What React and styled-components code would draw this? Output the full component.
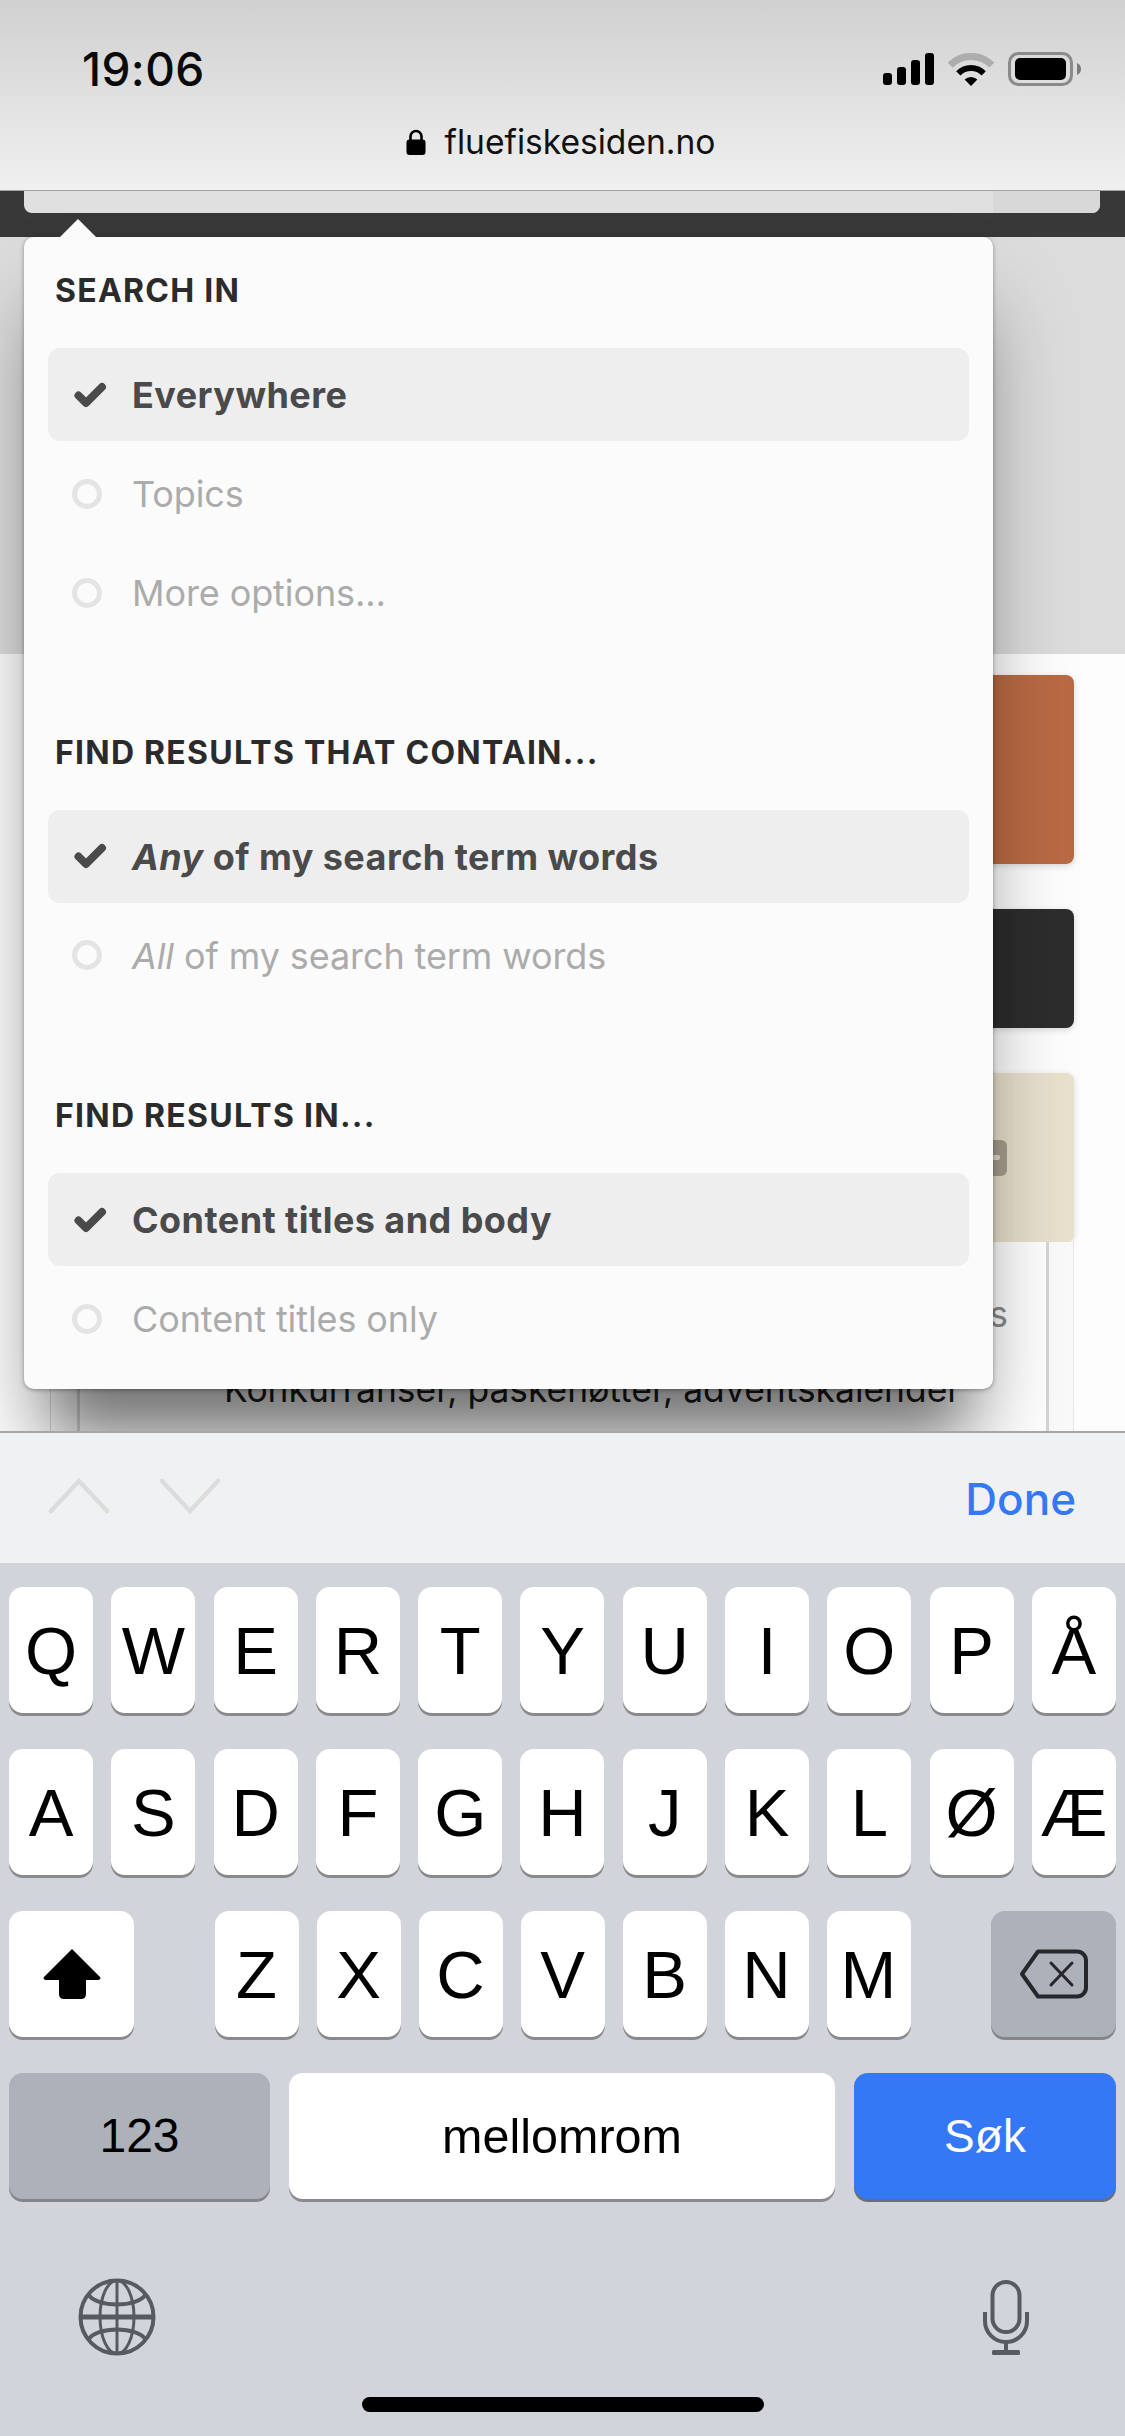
import React from 'react';
import styled, { createGlobalStyle } from 'styled-components';

const GlobalStyle = createGlobalStyle`
  html, body {
    margin: 0;
    padding: 0;
    background: #d1d4da;
  }
  * {
    box-sizing: border-box;
  }
`;

const Screen = styled.div`
  width: 1125px;
  height: 2436px;
  display: flex;
  flex-direction: column;
  overflow: hidden;
  font-family: Inter, 'Liberation Sans', sans-serif;
`;

/* browser chrome */
const TopBar = styled.header`
  height: 191px;
  flex: none;
  padding: 52px 44px 0 82px;
  background: linear-gradient(#d0d0d0, #f0f0f0);
  border-bottom: 1px solid #a3a3a3;
  position: relative;
  z-index: 3;
`;

const StatusRow = styled.div`
  height: 34px;
  display: flex;
  align-items: center;
  justify-content: space-between;
`;

const Time = styled.span`
  font-size: 46px;
  font-weight: 500;
  letter-spacing: 0.4px;
  line-height: 34px;
  color: #0a0a0a;
`;

const StatusIcons = styled.div`
  display: flex;
  align-items: center;
  gap: 14px;
`;

const AddressRow = styled.div`
  margin: 38px 0 0 -82px;
  width: 1125px;
  display: flex;
  align-items: center;
  justify-content: center;
  gap: 18px;
  padding-right: 3px;
`;

const Address = styled.span`
  font-size: 33.6px;
  line-height: 36px;
  color: #111;
`;

/* page behind the popup */
const Content = styled.main`
  height: 1240px;
  flex: none;
  position: relative;
  overflow: hidden;
  background: #fdfdfd;
`;

const Band = styled.div`
  height: 46px;
  padding: 0 25px 0 24px;
  background: #383838;
`;

const SearchBox = styled.div`
  height: 22px;
  display: flex;
  justify-content: flex-end;
  border-radius: 0 0 8px 8px;
  overflow: hidden;
  background: #e0e0e0;
`;

const SearchButton = styled.div`
  width: 107px;
  background: #d8d8d8;
`;

const Hero = styled.div`
  height: 417px;
  background: #dcdcdc;
`;

const Column = styled.div`
  padding: 21px 51px 0 50px;
  display: flex;
  flex-direction: column;
`;

const Banner = styled.div`
  height: ${(p) => p.$height}px;
  margin-bottom: ${(p) => p.$gap}px;
  border-radius: 8px;
  background: ${(p) => p.$color};
  box-shadow: 0 2px 6px rgba(0, 0, 0, 0.15);
  display: flex;
  align-items: center;
  justify-content: flex-end;
`;

const BannerBadge = styled.span`
  width: 62px;
  height: 36px;
  margin-right: 67px;
  padding-right: 7px;
  border-radius: 6px;
  background: rgba(90, 80, 70, 0.45);
  display: flex;
  align-items: center;
  justify-content: flex-end;

  &::after {
    content: '';
    width: 8px;
    height: 5px;
    border-radius: 2px;
    background: #e6dfcf;
  }
`;

const Outer = styled.div`
  height: 200px;
  padding: 0 24px 0 26px;
  background: #fafafa;
  border-left: 1px solid #d8d8d8;
  border-right: 1px solid #e6e6e6;
`;

const Inner = styled.div`
  height: 100%;
  padding: 49px 38px 0 144px;
  background: #fff;
  border: 2px solid #d6d6d6;
  border-width: 0 3px;
  font-size: 35.4px;
  line-height: 48px;
  color: #3a3a3a;
  text-align: right;
`;

const FadedLine = styled.div`
  height: 75px;
  color: #8a8a8a;
`;

const DimLine = styled.div`
  margin-right: 48px;
  white-space: nowrap;
  text-align: left;
  color: #1c1c1c;
`;

/* search options popup */
const Popup = styled.section`
  position: absolute;
  left: 24px;
  top: 46px;
  width: 969px;
  padding: 0 24px 24px;
  border-radius: 10px;
  background: #fbfbfb;
  box-shadow: 0 1px 4px rgba(0, 0, 0, 0.35), 0 60px 80px -10px rgba(0, 0, 0, 0.36),
    0 76px 50px -36px rgba(0, 0, 0, 0.3);

  &::before {
    content: '';
    position: absolute;
    left: 36px;
    top: -18px;
    border-left: 18px solid transparent;
    border-right: 18px solid transparent;
    border-bottom: 18px solid #fbfbfb;
  }
`;

const Heading = styled.h3`
  margin: ${(p) => p.$top}px 0 39px;
  padding-left: 7px;
  font-size: 32px;
  line-height: 36px;
  font-weight: 700;
  letter-spacing: 1.25px;
  color: #2b2b2b;
`;

const Options = styled.div`
  display: flex;
  flex-direction: column;
  gap: 6px;
`;

const Option = styled.div`
  height: 93px;
  display: flex;
  align-items: center;
  padding-left: 24px;
  border-radius: 12px;
  font-size: 36px;
  letter-spacing: ${(p) => (p.$active ? 0.45 : -0.1)}px;
  font-weight: ${(p) => (p.$active ? 700 : 400)};
  color: ${(p) => (p.$active ? '#4a4a4a' : '#ababab')};
  background: ${(p) => (p.$active ? '#eeeeee' : 'transparent')};
`;

const OptionMark = styled.span`
  width: 60px;
  flex: none;
  display: flex;
  align-items: center;
`;

const OptionLabel = styled.span`
  padding-top: 1px;
`;

const Radio = styled.span`
  width: 30px;
  height: 30px;
  border-radius: 50%;
  border: 5px solid #e4e4e4;
`;

/* toolbar above the keyboard */
const Accessory = styled.div`
  height: 132px;
  flex: none;
  padding: 0 49px 0 48px;
  display: flex;
  align-items: center;
  justify-content: space-between;
  background: #f0f1f2;
  border-top: 2px solid #a6a6a6;
  position: relative;
  z-index: 3;
`;

const Chevrons = styled.div`
  display: flex;
  gap: 49px;
  margin-top: -4px;
`;

const Done = styled.span`
  font-size: 44px;
  font-weight: 500;
  color: #3478f6;
  margin-top: 2px;
`;

/* keyboard */
const Keyboard = styled.div`
  height: 873px;
  flex: none;
  padding: 24px 9px 0;
  display: flex;
  flex-direction: column;
  background: #d1d4da;
  position: relative;
  z-index: 3;
`;

const KeyRows = styled.div`
  display: flex;
  flex-direction: column;
  gap: 36px;
`;

const KeyRow = styled.div`
  display: flex;
  justify-content: space-between;
`;

const KeyGroup = styled.div`
  display: flex;
  gap: 18px;
`;

const tones = {
  light: { bg: '#ffffff', fg: '#000000', edge: '#898a8d' },
  dark: { bg: '#acb1ba', fg: '#000000', edge: '#858689' },
  blue: { bg: '#3478f6', fg: '#ffffff', edge: '#6b6e75' }
};

const Key = styled.div`
  width: ${(p) => p.$width || 84}px;
  height: 126px;
  display: flex;
  align-items: center;
  justify-content: center;
  border-radius: 14px;
  font-family: 'Liberation Sans', Arial, sans-serif;
  font-size: ${(p) => p.$size || 67}px;
  line-height: 1;
  background: ${(p) => tones[p.$tone || 'light'].bg};
  color: ${(p) => tones[p.$tone || 'light'].fg};
  box-shadow: 0 3px 0 ${(p) => tones[p.$tone || 'light'].edge};
`;

const SystemRow = styled.div`
  margin-top: 79px;
  padding: 0 87px 0 69px;
  height: 78px;
  display: flex;
  justify-content: space-between;
  align-items: center;
`;

const HomeBar = styled.div`
  width: 402px;
  height: 15px;
  margin: 41px auto 0;
  border-radius: 8px;
  background: #000;
`;

const SignalIcon = () => (
  <svg width="51" height="32" viewBox="0 0 51 32" fill="#000">
    <rect x="0" y="20" width="9" height="12" rx="3" />
    <rect x="14" y="14" width="9" height="18" rx="3" />
    <rect x="28" y="7" width="9" height="25" rx="3" />
    <rect x="42" y="0" width="9" height="32" rx="3" />
  </svg>
);

const WifiIcon = () => (
  <svg width="46" height="33" viewBox="0 0 46 33" fill="none">
    <path d="M2.1 12.1A29.5 29.5 0 0 1 43.9 12.1" stroke="#adadad" strokeWidth="7" />
    <path d="M10.3 20.3A18 18 0 0 1 35.7 20.3" stroke="#000" strokeWidth="6" />
    <path d="M23 33L16.6 26.6A9 9 0 0 1 29.4 26.6Z" fill="#000" />
  </svg>
);

const BatteryIcon = () => (
  <svg width="73" height="34" viewBox="0 0 73 34">
    <rect x="1.5" y="1.5" width="62" height="31" rx="9" fill="none" stroke="#8a8a8a" strokeWidth="3" />
    <rect x="7" y="6" width="51" height="22" rx="5" fill="#000" />
    <path d="M69 11c2.5 1 4 3 4 6s-1.500 5-4 6z" fill="#7a7a7a" />
  </svg>
);

const LockIcon = () => (
  <svg width="20" height="26" viewBox="0 0 20 26">
    <path d="M4.500 12V7.500a5.500 5.500 0 0 1 11 0V12" fill="none" stroke="#000" strokeWidth="2.600" />
    <rect x="0.500" y="10.500" width="19" height="15.500" rx="3" fill="#000" />
  </svg>
);

const CheckIcon = () => (
  <svg width="36" height="28" viewBox="0 0 36 28" fill="none">
    <path
      d="M6.500 14.500L14 22L30 6"
      stroke="#4a4a4a"
      strokeWidth="8"
      strokeLinecap="round"
      strokeLinejoin="round"
    />
  </svg>
);

const ChevronIcon = ({ down }) => (
  <svg width="62" height="36" viewBox="0 0 62 36" fill="none">
    <path
      d={down ? 'M3 3L31 33L59 3' : 'M3 33L31 3L59 33'}
      stroke="#dcdcdc"
      strokeWidth="4.500"
      strokeLinecap="round"
    />
  </svg>
);

const ShiftIcon = () => (
  <svg width="58" height="50" viewBox="0 0 58 50" fill="#000">
    <path d="M29 0L57 28Q58.500 31 55 31H43V45Q43 50 38 50H21Q16 50 16 45V31H3Q-0.500 31 1 28Z" />
  </svg>
);

const DeleteIcon = () => (
  <svg width="70" height="50" viewBox="0 0 70 50" fill="none" stroke="#25272b">
    <path
      d="M19 2.500H58a9 9 0 0 1 9 9v27a9 9 0 0 1-9 9H19L3 25Z"
      strokeWidth="4"
      strokeLinejoin="round"
    />
    <path d="M32 14L53 36M53 14L32 36" strokeWidth="3" strokeLinecap="round" />
  </svg>
);

const GlobeIcon = () => (
  <svg width="78" height="78" viewBox="0 0 78 78" fill="none" stroke="#575a60" strokeWidth="3">
    <circle cx="39" cy="39" r="36.500" strokeWidth="4" />
    <ellipse cx="39" cy="39" rx="17" ry="36.500" />
    <path d="M39 2V76" />
    <path d="M2 39H76" strokeWidth="5" />
    <path d="M10 16C18 30 60 30 68 16" strokeWidth="4" />
    <path d="M10 62C18 48 60 48 68 62" strokeWidth="4" />
  </svg>
);

const MicIcon = () => (
  <svg width="46" height="75" viewBox="0 0 46 75" fill="none" stroke="#575a60" strokeWidth="4">
    <rect x="9.500" y="2" width="27" height="50" rx="13.500" />
    <path d="M2 32V41a21 21 0 0 0 42 0V32" />
    <path d="M23 62V70" />
    <rect x="9" y="70" width="28" height="5" rx="1.500" fill="#575a60" stroke="none" />
  </svg>
);

const optionGroups = [
  {
    title: 'SEARCH IN',
    top: 36,
    options: [
      { label: 'Everywhere', active: true },
      { label: 'Topics' },
      { label: 'More options...' }
    ]
  },
  {
    title: 'FIND RESULTS THAT CONTAIN...',
    top: 95.5,
    options: [
      { em: 'Any', label: ' of my search term words', active: true },
      { em: 'All', label: ' of my search term words' }
    ]
  },
  {
    title: 'FIND RESULTS IN...',
    top: 96.5,
    options: [
      { label: 'Content titles and body', active: true },
      { label: 'Content titles only' }
    ]
  }
];

const topRow = ['Q', 'W', 'E', 'R', 'T', 'Y', 'U', 'I', 'O', 'P', 'Å'];
const midRow = ['A', 'S', 'D', 'F', 'G', 'H', 'J', 'K', 'L', 'Ø', 'Æ'];
const lowRow = ['Z', 'X', 'C', 'V', 'B', 'N', 'M'];

function App() {
  return (
    <Screen>
      <GlobalStyle />
      <TopBar>
        <StatusRow>
          <Time>19:06</Time>
          <StatusIcons>
            <SignalIcon />
            <WifiIcon />
            <BatteryIcon />
          </StatusIcons>
        </StatusRow>
        <AddressRow>
          <LockIcon />
          <Address>fluefiskesiden.no</Address>
        </AddressRow>
      </TopBar>

      <Content>
        <Band>
          <SearchBox>
            <SearchButton />
          </SearchBox>
        </Band>
        <Hero />
        <Column>
          <Banner $height={189} $gap={45} $color="linear-gradient(90deg, #c9734a, #b96a44)" />
          <Banner $height={119} $gap={45} $color="#2d2d2d" />
          <Banner $height={169} $gap={0} $color="#e9e1ce">
            <BannerBadge />
          </Banner>
          <Outer>
            <Inner>
              <FadedLine>s</FadedLine>
              <DimLine>Konkurranser, påskenøtter, adventskalender</DimLine>
            </Inner>
          </Outer>
        </Column>

        <Popup>
          {optionGroups.map((group) => (
            <div key={group.title}>
              <Heading $top={group.top}>{group.title}</Heading>
              <Options>
                {group.options.map((option) => (
                  <Option key={option.label + option.em} $active={option.active}>
                    <OptionMark>{option.active ? <CheckIcon /> : <Radio />}</OptionMark>
                    <OptionLabel>
                      {option.em && <em>{option.em}</em>}
                      {option.label}
                    </OptionLabel>
                  </Option>
                ))}
              </Options>
            </div>
          ))}
        </Popup>
      </Content>

      <Accessory>
        <Chevrons>
          <ChevronIcon />
          <ChevronIcon down />
        </Chevrons>
        <Done>Done</Done>
      </Accessory>

      <Keyboard>
        <KeyRows>
          <KeyRow>
            {topRow.map((letter) => (
              <Key key={letter}>{letter}</Key>
            ))}
          </KeyRow>
          <KeyRow>
            {midRow.map((letter) => (
              <Key key={letter}>{letter}</Key>
            ))}
          </KeyRow>
          <KeyRow>
            <Key $width={125}>
              <ShiftIcon />
            </Key>
            <KeyGroup>
              {lowRow.map((letter) => (
                <Key key={letter}>{letter}</Key>
              ))}
            </KeyGroup>
            <Key $width={125} $tone="dark">
              <DeleteIcon />
            </Key>
          </KeyRow>
          <KeyRow>
            <Key $width={261} $tone="dark" $size={48}>123</Key>
            <Key $width={546} $size={48.5}>mellomrom</Key>
            <Key $width={262} $tone="blue" $size={46}>Søk</Key>
          </KeyRow>
        </KeyRows>
        <SystemRow>
          <GlobeIcon />
          <MicIcon />
        </SystemRow>
        <HomeBar />
      </Keyboard>
    </Screen>
  );
}

export default App;
